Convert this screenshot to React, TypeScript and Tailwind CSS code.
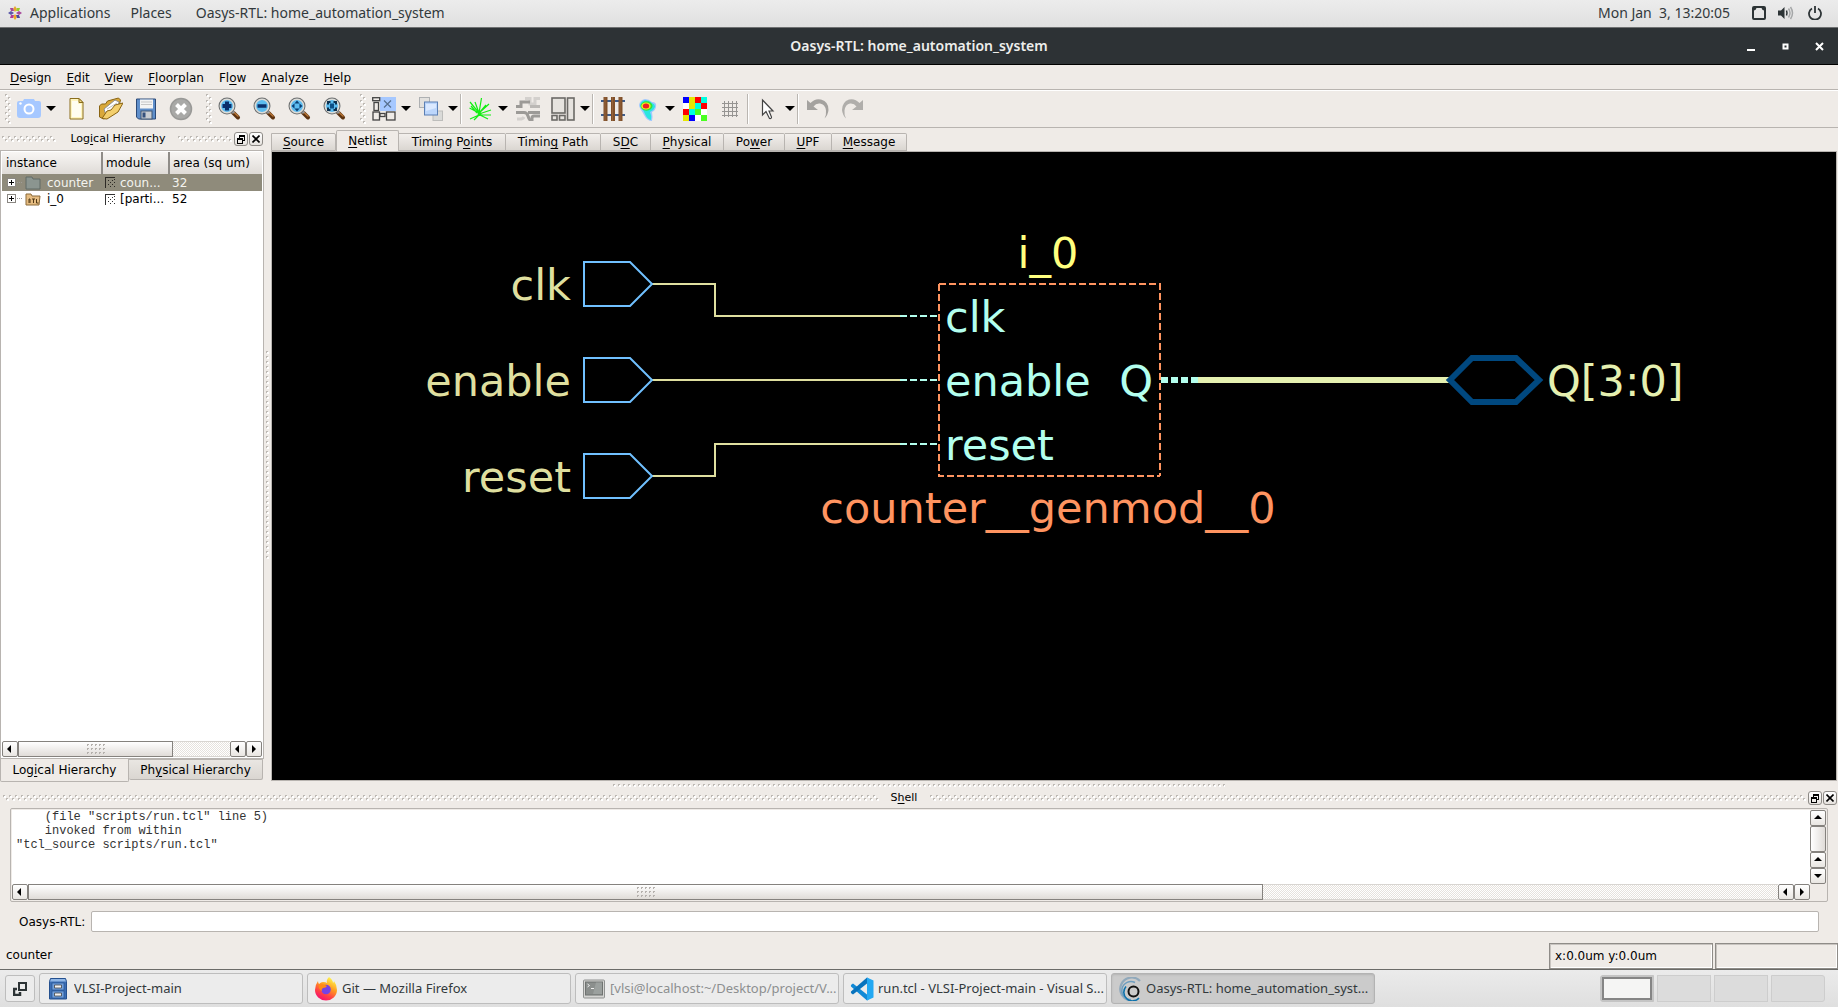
import { useId, type ReactNode } from "react";

/** Text with one underlined mnemonic letter. */
function Mnemonic({ text, at }: { text: string; at: number }) {
  return (
    <span className="whitespace-pre">
      {text.slice(0, at)}
      <span className="underline decoration-1 underline-offset-2">{text[at]}</span>
      {text.slice(at + 1)}
    </span>
  );
}

/** Staggered dots that mark a draggable handle. */
function Grip({ className }: { className: string }) {
  const id = useId();
  return (
    <svg className={className} aria-hidden="true" shapeRendering="crispEdges">
      <defs>
        <pattern id={id} width="6" height="6" patternUnits="userSpaceOnUse">
          <path d="M1 1h2v2H1zM4 4h2v2H4z" fill="#fff" />
          <path d="M0 0h2v1H1v1H0zM3 3h2v1H4v1H3z" fill="#bdb9b4" />
        </pattern>
      </defs>
      <rect width="100%" height="100%" fill={`url(#${id})`} />
    </svg>
  );
}

function SplitterDots({ vertical = false }: { vertical?: boolean }) {
  const id = useId();
  return (
    <svg className={vertical ? "h-[208px] w-[3px]" : "h-[3px] w-1/3"} aria-hidden="true" shapeRendering="crispEdges">
      <defs>
        <pattern id={id} width="5" height="5" patternUnits="userSpaceOnUse">
          <path d="M1 1h2v2H1z" fill="#fff" />
          <path d="M0 0h2v1H1v1H0z" fill="#bdb9b4" />
        </pattern>
      </defs>
      <rect width="100%" height="100%" fill={`url(#${id})`} />
    </svg>
  );
}

function Icon({ children, size = 24 }: { children: ReactNode; size?: number }) {
  return (
    <svg width={size} height={size} viewBox={`0 0 ${size} ${size}`} fill="none" aria-hidden="true" className="shrink-0">
      {children}
    </svg>
  );
}

/* ---------- toolbar drawings ---------- */

const camera = (
  <Icon>
    <path d="M2 4h4l1-2h10l1 2h4q2 0 2 2v12q0 3-3 3H3q-3 0-3-3V6q0-2 2-2z" fill="#a6c8ff" />
    <circle cx="12" cy="12" r="4.500" stroke="#fff" strokeWidth="2" />
    <circle cx="3.500" cy="6.500" r="1.200" fill="#fff" />
  </Icon>
);
const newDoc = (
  <Icon>
    <path d="M6 1.500h9l4 4V22H6z" fill="#fff5c0" stroke="#8a6d1c" />
    <path d="M8 4h6v3h3v13H8z" fill="#fffdf0" />
    <path d="M15 1.500v4h4z" fill="#f2dc8a" stroke="#8a6d1c" />
  </Icon>
);
const folder = (
  <Icon>
    <path d="M.500 20V9l2-2h4l2-3 11-3 2 2-2 8L5 22z" fill="#d9a83a" stroke="#8a6412" />
    <path d="M5 12 16 3l4 2-1 7-12 6z" fill="#fff" stroke="#8f8f8f" />
    <path d="M8 12 18 6" stroke="#bbb" />
    <path d="M3 21.500 8 14l4-1 4-5 8-2-5 9-11 7z" fill="#f3cf6d" stroke="#8a6412" />
  </Icon>
);
const save = (
  <Icon>
    <path d="M2.500 2h19v20h-17l-2-2z" fill="#5f8fcb" stroke="#2c4a78" />
    <rect x="6" y="2.500" width="13" height="9" fill="#f4f4f4" />
    <path d="M7 5h11M7 7.500h11" stroke="#c7c7c7" />
    <rect x="7" y="14" width="11" height="8" fill="#c9cdd2" stroke="#3f5674" />
    <rect x="8.500" y="15.500" width="3" height="5" fill="#35517c" />
  </Icon>
);
const cancel = (
  <Icon>
    <circle cx="12" cy="12" r="10.500" fill="#a9a9a7" stroke="#999997" strokeWidth="1.500" />
    <path d="m7.500 7.500 9 9m0-9-9 9" stroke="#fff" strokeWidth="4" />
  </Icon>
);

function Magnifier({ children }: { children: ReactNode }) {
  return (
    <Icon>
      <path d="m15 15.500 5 5" stroke="#5d3310" strokeWidth="4" strokeLinecap="round" />
      <path d="m15.500 15 4.500 4" stroke="#b97636" strokeWidth="1.500" strokeLinecap="round" />
      <path d="m13 13 3 3" stroke="#999" strokeWidth="3" />
      <circle cx="9" cy="9" r="7.500" fill="#5cbcf0" stroke="#6c6f70" strokeWidth="2" />
      <circle cx="9" cy="9" r="6.700" stroke="#dcdcd8" strokeWidth="1.500" />
      {children}
    </Icon>
  );
}
const zoomIn = (
  <Magnifier>
    <path d="M9 4.500v9M4.500 9h9" stroke="#0b2f6b" strokeWidth="4" />
  </Magnifier>
);
const zoomOut = (
  <Magnifier>
    <path d="M4.500 9h9" stroke="#0b2f6b" strokeWidth="3.500" />
  </Magnifier>
);
const zoomFit = (
  <Magnifier>
    <path d="m9 3.500 2.500 3h-5zM9 14.500l2.500-3h-5zM3.500 9l3-2.500v5zM14.500 9l-3-2.500v5z" fill="#0b3f73" />
  </Magnifier>
);
const zoomBox = (
  <Magnifier>
    <path d="M5 7.500V5h2.500M10.500 5H13v2.500M13 10.500V13h-2.500M7.500 13H5v-2.500" stroke="#0b3050" strokeWidth="2" />
    <rect x="7" y="6.500" width="4" height="5" fill="#0b4f86" />
  </Magnifier>
);
const netlist = (
  <Icon>
    <rect x="8" y="0" width="16" height="14" fill="#a6c8ff" />
    <path d="m12 3.500 7 7m0-7-7 7" stroke="#57708f" strokeWidth="1.200" />
    <g stroke="#444" fill="#efebe7" strokeWidth="1.300">
      <rect x=".700" y=".700" width="7" height="3" />
      <rect x="2" y="5.500" width="4.500" height="8" />
      <rect x="1" y="15" width="6.500" height="8" />
      <rect x="8" y="16.500" width="5" height="3" />
      <rect x="14.500" y="15" width="8.500" height="8" />
    </g>
  </Icon>
);
const layers = (
  <Icon>
    <rect x=".500" y=".500" width="10" height="10" fill="#e3e1de" stroke="#aeb0b2" />
    <rect x="14" y="14" width="9.500" height="9.500" fill="#dadad8" stroke="#bdbdbb" />
    <rect x="5.500" y="5" width="13" height="13" fill="#bcd6fb" stroke="#5b7fb4" />
    <path d="M7 7h10v4L7 14z" fill="#dbe9ff" />
  </Icon>
);
const burst = (
  <Icon>
    <path
      d="M10 16 12.500 1M10 16 6 5M10 16 1 5M10 16 .500 11M10 16 20 7M10 17l12-4M10 18l12 0M10 18l-9 4M10 18l-5 5M11 18l8 4M11 15l6-7M8 16 2 9"
      stroke="#12ee12"
      strokeWidth="1.200"
    />
    <circle cx="10.500" cy="17" r="2" fill="#12ee12" />
  </Icon>
);
const routes = (
  <Icon>
    <g stroke="#d3d0cd" strokeWidth="3">
      <path d="M9 1.500h5V7h5V1.500h5" />
      <path d="M1 22h3q3 0 4-2" />
    </g>
    <g stroke="#9c9a97" strokeWidth="3">
      <path d="M0 9.500h5V5h9" />
      <path d="M14 9.500h10" stroke="#bbb8b5" />
      <path d="M0 15.500h8q3 0 4 3.500t3 5" />
      <path d="M12 15.500h12M24 19h-6q-2 0-2 2v3" />
    </g>
  </Icon>
);
const floorplan = (
  <Icon>
    <g stroke="#6b6966" strokeWidth="1.600" fill="#e6e3df">
      <rect x="1" y="1" width="13" height="15" />
      <rect x="16.500" y="1" width="6.500" height="22" />
      <rect x="1" y="18.500" width="5" height="4.500" />
      <rect x="8.500" y="18.500" width="5.500" height="4.500" />
    </g>
  </Icon>
);
const rails = (
  <Icon>
    <path d="M0 4h24M0 18h24" stroke="#3d5d8c" strokeWidth="2" />
    <path d="M4.500 0v24M12 0v24M19.500 0v24" stroke="#80502a" strokeWidth="4" />
    <path d="M4 0v24M11.500 0v24M19 0v24" stroke="#94623a" />
  </Icon>
);
const heatmap = (
  <Icon>
    <path d="M3 8q1-5 6-6 4 0 7 3 5 0 4 5-1 4-4 5 1 5 0 9-5 0-8-6-1-2-3-5-2-3-2-5z" fill="#9fc8ff" />
    <path d="M4 8q1-4 5-5 4 0 7 3 3 1 3 4-1 3-5 5 2 4 1 8-4-1-6-6-1-3-3-5-2-2-2-4z" fill="#29e6e0" />
    <ellipse cx="10.500" cy="9" rx="6" ry="4.700" fill="#36e038" />
    <ellipse cx="10" cy="9" rx="4.700" ry="3.600" fill="#f5e720" />
    <ellipse cx="10" cy="9" rx="3.200" ry="2.500" fill="#f02020" />
  </Icon>
);
const blocks = (
  <Icon>
    <g shapeRendering="crispEdges">
      <path d="M0 0h6v6H0zM6 18h6v6H6z" fill="#0000ff" />
      <path d="M6 0h6v12H6zM0 18h6v6H0z" fill="#e6e600" />
      <path d="M12 0h6v6h-6zM18 6h6v6h-6zM0 12h6v6H0z" fill="#ff0000" />
      <path d="M18 0h6v6h-6zM12 6h6v6h-6zM6 12h6v6H6z" fill="#00ffe0" />
      <path d="M12 12h6v6h-6zM18 18h6v6h-6z" fill="#48ff20" />
      <path d="M0 6h6v6H0zM18 12h6v6h-6zM12 18h6v6h-6z" fill="#fff" />
    </g>
  </Icon>
);
const grid = (
  <Icon>
    <path d="M6.500 4v16M10.500 4v16M14.500 4v16M18.500 4v16M4 6.500h16M4 10.500h16M4 14.500h16M4 18.500h16" stroke="#969492" shapeRendering="crispEdges" />
  </Icon>
);
const pointer = (
  <Icon>
    <path d="M6.500 3v15l3.500-3.500 3.500 7q2 .500 2-1.500l-2.500-6H17z" fill="#fff" stroke="#444" strokeWidth="1.200" />
  </Icon>
);
const undo = (
  <Icon>
    <path d="M1 13V3l3.500 3Q9 1 15 2.500 23 5 22.500 13q-.500 5-4 8.500 2-4 1.500-8Q19 7 14 6.500q-4-.500-6.500 3L12 13z" fill="#a4a29f" />
  </Icon>
);
const redo = (
  <Icon>
    <path d="M22 13V3l-3.500 3Q14 1 8 2.500 1 5 1 13q.500 5 4 8.500-2-4-1.500-8Q4.500 7 9 6.500q4-.500 6.500 3L11 13z" fill="#b0aeab" />
  </Icon>
);

function ToolButton({ label, children, menu = false }: { label: string; children: ReactNode; menu?: boolean }) {
  return (
    <>
      <button type="button" aria-label={label} className="flex h-full w-[35px] items-center justify-center">
        {children}
      </button>
      {menu && (
        <button type="button" aria-label={`${label} options`} className="flex h-full w-3 items-center">
          <svg width="10" height="5" viewBox="0 0 10 5" aria-hidden="true">
            <path d="M0 0h10L5 5z" fill="#000" />
          </svg>
        </button>
      )}
    </>
  );
}

function ToolSeparator() {
  return (
    <span className="flex h-full w-[3px] items-center">
      <span className="h-[30px] w-0.5 border-r border-l border-r-white border-l-[#bab6b1]" />
    </span>
  );
}

function Toolbar() {
  return (
    <div role="toolbar" className="flex h-[38px] items-center border-b border-[#b8b4b0] bg-[#efebe7] shadow-[inset_0_1px_0_#fff]">
      <Grip className="ml-[5px] h-[30px] w-[6px]" />
      <ToolButton label="Capture" menu>{camera}</ToolButton>
      <ToolButton label="New">{newDoc}</ToolButton>
      <ToolButton label="Open">{folder}</ToolButton>
      <ToolButton label="Save">{save}</ToolButton>
      <ToolButton label="Stop">{cancel}</ToolButton>
      <Grip className="ml-2 h-[30px] w-[6px]" />
      <ToolButton label="Zoom in">{zoomIn}</ToolButton>
      <ToolButton label="Zoom out">{zoomOut}</ToolButton>
      <ToolButton label="Zoom to fit">{zoomFit}</ToolButton>
      <ToolButton label="Zoom to selection">{zoomBox}</ToolButton>
      <Grip className="ml-2 h-[30px] w-[6px]" />
      <ToolButton label="Netlist view" menu>{netlist}</ToolButton>
      <ToolButton label="Layers" menu>{layers}</ToolButton>
      <ToolSeparator />
      <ToolButton label="Flylines" menu>{burst}</ToolButton>
      <ToolButton label="Routes">{routes}</ToolButton>
      <ToolButton label="Floorplan" menu>{floorplan}</ToolButton>
      <ToolSeparator />
      <ToolButton label="Rails">{rails}</ToolButton>
      <ToolButton label="Heat map" menu>{heatmap}</ToolButton>
      <ToolButton label="Blocks">{blocks}</ToolButton>
      <ToolButton label="Grid">{grid}</ToolButton>
      <ToolSeparator />
      <ToolButton label="Pointer" menu>{pointer}</ToolButton>
      <ToolSeparator />
      <ToolButton label="Undo">{undo}</ToolButton>
      <ToolButton label="Redo">{redo}</ToolButton>
    </div>
  );
}

/* ---------- desktop panel and window title ---------- */

function TopPanel() {
  return (
    <header className="flex h-7 items-center border-b border-[#6f7172] bg-linear-to-b from-[#ececec] to-[#e0e0e0] px-2 pb-px font-['Noto_Sans',sans-serif] text-sm text-[#32393c]">
      <svg width="14" height="14" viewBox="0 0 14 14" aria-hidden="true" className="mr-2">
        <path d="M7 0 9 3 7 6 5 3z" fill="#e9a530" />
        <path d="m7 8 2 3-2 3-2-3z" fill="#efa724" />
        <path d="m0 7 3-2 3 2-3 2z" fill="#5a58a8" />
        <path d="m8 7 3-2 3 2-3 2z" fill="#a8489a" />
        <path d="M2 2h3l1 3-3 0z" fill="#a8489a" />
        <path d="M12 2H9L8 5l3 0z" fill="#9ccd2a" />
        <path d="M2 12h3l1-3-3 0z" fill="#b03a9a" />
        <path d="M12 12H9L8 9l3 0z" fill="#4a48a0" />
      </svg>
      <button type="button">Applications</button>
      <button type="button" className="ml-5">Places</button>
      <button type="button" className="ml-6">Oasys-RTL: home_automation_system</button>
      <span className="ml-auto whitespace-pre">Mon Jan  3, 13:20:05</span>
      <button type="button" aria-label="Display" className="ml-[22px]">
        <svg width="14" height="14" viewBox="0 0 14 14" aria-hidden="true">
          <path fillRule="evenodd" d="M2 0h10q2 0 2 2v10q0 2-2 2H2q-2 0-2-2V2q0-2 2-2zm2.500 2Q4 4 2 4.500V12h10V4.500Q10 4 9.500 2z" fill="#2d3436" />
        </svg>
      </button>
      <button type="button" aria-label="Volume" className="ml-3">
        <svg width="16" height="14" viewBox="0 0 16 14" fill="none" aria-hidden="true">
          <path d="M0 4.500h3L6.500 1v12L3 9.500H0z" fill="#2d3436" />
          <path d="M8.500 4.500q1 2.500 0 5" stroke="#2d3436" strokeWidth="1.500" />
          <path d="M10.500 2.500q3 4.500 0 9M12.500 1q4 6 0 12" stroke="#a5a7a8" strokeWidth="1.500" />
        </svg>
      </button>
      <button type="button" aria-label="Power" className="mr-2 ml-[14px]">
        <svg width="14" height="14" viewBox="0 0 14 14" fill="none" aria-hidden="true">
          <path d="M4 2.500a6 6 0 1 0 6 0M7 0v7" stroke="#2d3436" strokeWidth="1.800" />
        </svg>
      </button>
    </header>
  );
}

function TitleBar() {
  return (
    <div className="grid h-[37px] grid-cols-[1fr_auto_1fr] items-center border-b border-black bg-[#2d3235] font-['Noto_Sans',sans-serif] text-[#eeeeec]">
      <h1 className="col-start-2 text-sm font-semibold">Oasys-RTL: home_automation_system</h1>
      <div className="flex items-center justify-end gap-[25px] pr-3.5">
        <button type="button" aria-label="Minimize">
          <svg width="9" height="9" viewBox="0 0 9 9" aria-hidden="true"><path d="M0 7h8v2H0z" fill="#fff" /></svg>
        </button>
        <button type="button" aria-label="Maximize">
          <svg width="9" height="9" viewBox="0 0 9 9" fill="none" aria-hidden="true"><path d="M2.500 2.500h4v4h-4z" stroke="#fff" strokeWidth="2" /></svg>
        </button>
        <button type="button" aria-label="Close">
          <svg width="9" height="9" viewBox="0 0 9 9" aria-hidden="true"><path d="m1 1 7 7m0-7-7 7" stroke="#fff" strokeWidth="2" /></svg>
        </button>
      </div>
    </div>
  );
}

function MenuBar() {
  const items: [string, number][] = [
    ["Design", 0],
    ["Edit", 0],
    ["View", 0],
    ["Floorplan", 0],
    ["Flow", 2],
    ["Analyze", 0],
    ["Help", 0],
  ];
  return (
    <nav className="flex h-[25px] items-center gap-[15px] border-b border-[#b8b4b0] px-2.5 pt-0.5">
      {items.map(([text, at]) => (
        <button key={text} type="button">
          <Mnemonic text={text} at={at} />
        </button>
      ))}
    </nav>
  );
}

/* ---------- dock pieces ---------- */

function DockButtons() {
  const box =
    "flex size-3.5 items-center justify-center rounded-[3px] border border-[#8d8a86] bg-linear-to-b from-white to-[#e6e2de]";
  return (
    <div className="flex gap-px">
      <button type="button" aria-label="Float" className={box}>
        <svg width="8" height="9" viewBox="0 0 8 9" fill="none" aria-hidden="true" shapeRendering="crispEdges">
          <path d="M2 0h6v2H2zM7 2h1v4H6V5h1zM2 2h1v1H2zM0 3h6v2H0zM0 5h1v4H0zM5 5h1v4H5zM1 8h4v1H1z" fill="#000" />
        </svg>
      </button>
      <button type="button" aria-label="Close" className={box}>
        <svg width="8" height="8" viewBox="0 0 8 8" aria-hidden="true">
          <path d="m.500.500 7 7m0-7-7 7" stroke="#000" strokeWidth="1.600" />
        </svg>
      </button>
    </div>
  );
}

const arrows = {
  left: "M5 0v8L1 4z",
  right: "M2 0v8l4-4z",
  up: "M0 5h8L4 1z",
  down: "M0 2h8L4 6z",
};

function ArrowButton({ dir }: { dir: keyof typeof arrows }) {
  return (
    <button
      type="button"
      aria-label={`Scroll ${dir}`}
      className="flex size-4 shrink-0 items-center justify-center rounded-xs border border-[#85827e] bg-linear-to-b from-white to-[#e9e6e2]"
    >
      <svg width="8" height="8" viewBox="0 0 8 8" aria-hidden="true">
        <path d={arrows[dir]} fill="#000" />
      </svg>
    </button>
  );
}

function HScroll({ thumb }: { thumb: string }) {
  return (
    <div className="flex h-4 min-w-0 flex-1">
      <ArrowButton dir="left" />
      <div className="flex-1 border-y border-[#d8d5d1] bg-[repeating-conic-gradient(#ffffff_0_25%,#e6e2dd_0_50%)] bg-size-[2px_2px]">
        <div
          className={`-my-px flex h-4 items-center justify-center border border-[#85827e] bg-linear-to-b from-white to-[#e0dcd8] ${thumb}`}
        >
          <svg width="18" height="10" viewBox="0 0 18 10" aria-hidden="true" shapeRendering="crispEdges">
            {[0, 4, 8].map((y) =>
              [0, 4, 8, 12, 16].map((x) => (
                <path key={`${x}-${y}`} d={`M${x} ${y}h2v1h-1v1h-1z`} fill="#b5b1ad" />
              )),
            )}
          </svg>
        </div>
      </div>
      <ArrowButton dir="left" />
      <ArrowButton dir="right" />
    </div>
  );
}

function Expander() {
  return (
    <svg width="18" height="16" viewBox="0 0 18 16" fill="none" aria-hidden="true" shapeRendering="crispEdges">
      <path d="M2.500 3.500h8v8h-8z" fill="#fff" stroke="#8a8782" />
      <path d="M4 7.500h5M6.500 5v5" stroke="#000" />
      <path d="M12 7.500h5" stroke="#a09d98" strokeDasharray="1 1" />
    </svg>
  );
}

function ModuleMark({ dark }: { dark: boolean }) {
  const ink = dark ? "#2d2a25" : "#333";
  return (
    <svg width="10" height="11" viewBox="0 0 10 11" fill="none" aria-hidden="true" shapeRendering="crispEdges" className="shrink-0">
      <path d="M.500 11V.500H10" stroke={ink} />
      <path d="M3 3h1v1H3zM7 3h1v1H7zM5 5h1v1H5zM9 5h1v1H9zM3 7h1v1H3zM7 7h1v1H7zM5 9h1v1H5zM9 9h1v1H9zM9 2h1v1H9z" fill={ink} />
    </svg>
  );
}

function HierarchyTree() {
  const rows = [
    { name: "counter", module: "coun...", area: "32", selected: true },
    { name: "i_0", module: "[parti...", area: "52", selected: false },
  ];
  return (
    <table className="w-full table-fixed border-collapse bg-white">
      <colgroup>
        <col className="w-[100px]" />
        <col className="w-[67px]" />
        <col />
      </colgroup>
      <thead>
        <tr className="h-[22px] bg-linear-to-b from-[#f8f6f4] to-[#dfdbd7] text-left">
          <th className="border-r-2 border-[#8f8c88] pl-1 font-normal">instance</th>
          <th className="border-r-2 border-[#8f8c88] pl-[3px] font-normal">module</th>
          <th className="pl-[3px] font-normal">area (sq um)</th>
        </tr>
      </thead>
      <tbody>
        {rows.map((r) => (
          <tr key={r.name} className={r.selected ? "h-[17px] bg-[#8f8b7b] text-[#f4f3ef]" : "h-4"}>
            <td className="p-0 pl-[3px] leading-4">
              <span className="flex items-center">
                <Expander />
                <svg width="16" height="14" viewBox="0 0 16 14" aria-hidden="true" className="mr-1.5 ml-0.5">
                  {r.selected ? (
                    <path d="M1 1h6l1 2h7v10H1z" fill="#8b9590" stroke="#616a66" />
                  ) : (
                    <>
                      <path d="M1 13V2h5l1 2h8l-1 9z" fill="#e6bd82" stroke="#8b6a38" />
                      <path d="M4 11V7h1v4M7 7h3M8.500 7v4M11.500 7v4h2" stroke="#503814" fill="none" />
                    </>
                  )}
                </svg>
                {r.name}
              </span>
            </td>
            <td className="p-0 pl-[3px] leading-4">
              <span className="flex items-center gap-[5px]">
                <ModuleMark dark={r.selected} />
                {r.module}
              </span>
            </td>
            <td className="p-0 pl-[3px] leading-4">{r.area}</td>
          </tr>
        ))}
      </tbody>
    </table>
  );
}

function HierarchyDock() {
  return (
    <section className="flex w-[264px] shrink-0 flex-col">
      <div className="flex h-[22px] items-center justify-between pr-px pl-0.5 text-[11px]">
        <Grip className="h-[6px] w-[54px]" />
        <h2 className="pl-0.5">
          <Mnemonic text="Logical Hierarchy" at={3} />
        </h2>
        <div className="flex items-center gap-0.5">
          <Grip className="h-[6px] w-[54px]" />
          <DockButtons />
        </div>
      </div>
      <div className="flex flex-1 flex-col border border-[#b8b4b0] bg-white p-px">
        <HierarchyTree />
        <div className="mt-auto flex">
          <HScroll thumb="w-[155px]" />
        </div>
      </div>
      <div role="tablist" className="flex h-[23px] items-start">
        <button
          type="button"
          role="tab"
          aria-selected="true"
          className="h-[23px] w-[129px] rounded-b-xs border border-t-0 border-[#b8b4b0] bg-[#efebe7]"
        >
          <Mnemonic text="Logical Hierarchy" at={3} />
        </button>
        <button
          type="button"
          role="tab"
          aria-selected="false"
          className="h-[21px] w-[134px] rounded-b-xs border border-l-0 border-[#b8b4b0] bg-linear-to-b from-[#e9e6e2] to-[#dad6d1]"
        >
          <Mnemonic text="Physical Hierarchy" at={2} />
        </button>
      </div>
    </section>
  );
}

/* ---------- schematic ---------- */

function InputPort({ y, name }: { y: number; name: string }) {
  return (
    <g>
      <path d={`M312 ${y - 22}H358L380 ${y}L358 ${y + 22}H312Z`} stroke="#70c0ff" strokeWidth="2" />
      <text x="299" y={y + 16} textAnchor="end" fill="#dfdf9f">{name}</text>
    </g>
  );
}

function Schematic() {
  return (
    <svg
      role="img"
      aria-label="Netlist schematic"
      className="size-full bg-black font-['DejaVu_Sans',sans-serif] text-[43px]"
      fill="none"
    >
      <g stroke="#dfdf9f" strokeWidth="2">
        <path d="M380 132H443V164H628" />
        <path d="M380 228H628" />
        <path d="M380 324H443V292H628" />
      </g>
      <path d="M628 164h38M628 228h38M628 292h38" stroke="#b3ffee" strokeWidth="2" strokeDasharray="7 3" />
      <InputPort y={132} name="clk" />
      <InputPort y={228} name="enable" />
      <InputPort y={324} name="reset" />

      <path d="M667 132H888V324" stroke="#ff9460" strokeWidth="2" strokeDasharray="7 3" />
      <path d="M667 132V324H888" stroke="#ff9460" strokeWidth="2" strokeDasharray="7 3" />
      <text x="776" y="116" textAnchor="middle" fill="#ffff7f">i_0</text>
      <text x="776" y="371" textAnchor="middle" fill="#ff9460">counter__genmod__0</text>
      <g fill="#b3ffee">
        <text x="673" y="180">clk</text>
        <text x="673" y="244">enable</text>
        <text x="673" y="308">reset</text>
        <text x="881" y="244" textAnchor="end">Q</text>
      </g>

      <path d="M889 228h38" stroke="#b3ffee" strokeWidth="6" strokeDasharray="7 3" />
      <path d="M926 228H1177" stroke="#e5f0b0" strokeWidth="6" />
      <path d="M1178 228 1200 206H1244L1267 228 1244 250H1200Z" stroke="#00487f" strokeWidth="6" />
      <text x="1275" y="244" fill="#e5f0b0">Q[3:0]</text>
    </svg>
  );
}

function Workspace() {
  const tabs: [string, number, string][] = [
    ["Source", 0, "w-[65px]"],
    ["Netlist", 0, "w-[63px]"],
    ["Timing Points", 8, "w-[107px]"],
    ["Timing Path", 5, "w-[95px]"],
    ["SDC", 1, "w-[50px]"],
    ["Physical", 0, "w-[73px]"],
    ["Power", 2, "w-[61px]"],
    ["UPF", 0, "w-[47px]"],
    ["Message", 0, "w-[75px]"],
  ];
  return (
    <section className="flex min-w-0 flex-1 flex-col pr-px pb-px">
      <div role="tablist" className="flex h-[23px] items-end pt-0.5">
        {tabs.map(([text, at, width]) =>
          text === "Netlist" ? (
            <button
              key={text}
              type="button"
              role="tab"
              aria-selected="true"
              className={`h-[21px] rounded-t-xs border border-b-0 border-[#b8b4b0] bg-[#efebe7] ${width}`}
            >
              <Mnemonic text={text} at={at} />
            </button>
          ) : (
            <button
              key={text}
              type="button"
              role="tab"
              aria-selected="false"
              className={`h-[18px] rounded-tr-xs border border-l-0 border-[#b8b4b0] bg-linear-to-b from-[#f2efec] to-[#dad6d1] leading-4 first:border-l ${width}`}
            >
              <Mnemonic text={text} at={at} />
            </button>
          ),
        )}
      </div>
      <div className="min-h-0 flex-1 overflow-hidden border border-[#b8b4b0]">
        <Schematic />
      </div>
    </section>
  );
}

/* ---------- shell ---------- */

function ShellDock() {
  return (
    <section className="shrink-0">
      <div className="flex h-5 items-center gap-3 pr-px pl-[3px] text-[11px]">
        <Grip className="h-[6px] min-w-0 flex-1" />
        <h2 className="pr-px">
          <Mnemonic text="Shell" at={1} />
        </h2>
        <Grip className="h-[6px] min-w-0 flex-1" />
        <div className="-ml-2.5">
          <DockButtons />
        </div>
      </div>
      <div className="mr-2.5 ml-2.5 flex h-[94px] rounded-xs border border-[#b8b4b0] p-px">
        <div className="flex min-w-0 flex-1 flex-col bg-white">
          <pre className="min-h-0 flex-1 overflow-hidden pl-1 font-['Liberation_Mono',monospace] text-xs leading-[14px] text-[#333]">
            {'    (file "scripts/run.tcl" line 5)\n    invoked from within\n"tcl_source scripts/run.tcl"'}
          </pre>
          <div className="flex">
            <HScroll thumb="w-12/17" />
          </div>
        </div>
        <div className="flex w-4 flex-col pb-4">
          <ArrowButton dir="up" />
          <div className="flex-1 rounded-xs border border-[#85827e] bg-linear-to-r from-white to-[#e0dcd8]" />
          <ArrowButton dir="up" />
          <ArrowButton dir="down" />
        </div>
      </div>
      <div className="mt-[9px] mb-[11px] flex h-[21px] items-center gap-1.5 pr-[19px] pl-[19px]">
        <label htmlFor="command" className="whitespace-nowrap">Oasys-RTL:</label>
        <input
          id="command"
          type="text"
          className="h-full min-w-0 flex-1 rounded-xs border border-[#b8b4b0] bg-white px-1 outline-none"
        />
      </div>
    </section>
  );
}

function StatusBar() {
  const cell = "flex h-full items-center border border-[#8f8c88] pl-[5px] shadow-[inset_1px_1px_0_#c8c4c0,inset_-1px_-1px_0_#fff]";
  return (
    <footer className="flex h-[26px] shrink-0 items-center gap-0.5 pl-1.5">
      <span className="flex-1 pb-0.5">counter</span>
      <span className={`w-[164px] ${cell}`}>x:0.0um y:0.0um</span>
      <span className={`w-[123px] ${cell}`} />
    </footer>
  );
}

/* ---------- desktop task list ---------- */

const cabinet = (
  <Icon>
    <path d="M4.500 1.500h15l1 3v17.500h-17V4.500z" fill="#3c6eb4" stroke="#24508f" />
    <path d="M5 2h14l1 2.500H4z" fill="#8fb6e6" />
    <g fill="#72a0dc" stroke="#24508f" strokeWidth=".700">
      <rect x="6" y="6" width="12" height="7" />
      <rect x="6" y="14" width="12" height="7" />
    </g>
    <path d="M8.500 8h7v3h-7zM8.500 16h7v3h-7z" fill="#f2f2f2" stroke="#444" strokeWidth=".800" />
  </Icon>
);

function Firefox() {
  const id = useId();
  return (
    <Icon>
      <defs>
        <linearGradient id={id} x1="18" y1="2" x2="7" y2="22" gradientUnits="userSpaceOnUse">
          <stop offset="0" stopColor="#fff04a" />
          <stop offset=".4" stopColor="#ff9a1f" />
          <stop offset=".75" stopColor="#ff3f47" />
          <stop offset="1" stopColor="#f5156c" />
        </linearGradient>
      </defs>
      <path
        d="M15 0q4 3 4 6 1-1 1-2 3 4 3 9a11 10.500 0 0 1-22 0Q1 8 4 4q0 2 1 3 2-2 4-2 3 0 4 1-1-3 2-6z"
        fill={`url(#${id})`}
      />
      <circle cx="12" cy="12.500" r="4.800" fill="#7542e5" />
      <path d="M5 8q4-2 8 1-1 2-4 2-2 1-1 3-4-2-3-6z" fill="#ff8a16" />
    </Icon>
  );
}

const terminal = (
  <Icon>
    <rect x="1.500" y="3" width="21" height="18" rx="1" fill="#d5d5d3" stroke="#8f9190" />
    <rect x="3.500" y="5" width="17" height="13" fill="#8b8f8d" stroke="#6f7371" />
    <path d="m5.500 7 2 1.500-2 1.500M9 11.500h3" stroke="#eee" />
    <path d="M14 5.500h6V17h-9z" fill="#9ba09e" />
  </Icon>
);
const vscode = (
  <Icon>
    <path d="M17 .500 19 2v20l-2 1.500L1 9.500q-.500-1 .500-2L3 6.500l14 11z" fill="#1089d6" />
    <path d="M17 .500 1 14.500q-.500 1 .500 2l1.500 1L17 6.500z" fill="#0873bd" />
    <path d="M17 .500 23.500 3.500V20.500L17 23.500z" fill="#23a8f2" />
  </Icon>
);
const swirl = (
  <Icon>
    <circle cx="15.500" cy="14.500" r="5" stroke="#111" strokeWidth="2" />
    <path d="M22 4A11.500 11.500 0 1 0 13 23.500" stroke="#90a9bc" strokeWidth="2.200" />
    <path d="M17 5.500A9 9 0 1 0 13 22.500" stroke="#6d9dbf" strokeWidth="1.500" />
    <path d="M8 9.500A8.500 8.500 0 0 0 21 21" stroke="#0d72ac" strokeWidth="1.600" />
  </Icon>
);

function TaskBar() {
  const tasks = [
    { icon: cabinet, text: "VLSI-Project-main", look: "border-[#bdbdbd] bg-[#ececec]" },
    { icon: <Firefox />, text: "Git — Mozilla Firefox", look: "border-[#bdbdbd] bg-[#ececec]" },
    { icon: terminal, text: "[vlsi@localhost:~/Desktop/project/V...", look: "border-[#bdbdbd] bg-[#ececec] text-[#8c8f90]" },
    { icon: vscode, text: "run.tcl - VLSI-Project-main - Visual S...", look: "border-[#bdbdbd] bg-[#ececec]" },
    {
      icon: swirl,
      text: "Oasys-RTL: home_automation_syst...",
      look: "border-[#b3b3b3] bg-[#cbcbcb] shadow-[inset_0_1px_2px_#b5b5b5]",
    },
  ];
  return (
    <footer className="flex h-[38px] shrink-0 items-center border-t border-[#6b6b68] bg-linear-to-b from-[#ebebeb] to-[#dfdfdf] pr-[13px] pl-[5px] font-['Noto_Sans',sans-serif] text-[13px] text-[#32393c]">
      <button
        type="button"
        aria-label="Show desktop"
        className="mr-1 flex h-[27px] w-[30px] items-center justify-center rounded-[3px] border border-[#bdbdbd] bg-[#ececec]"
      >
        <svg width="14" height="14" viewBox="0 0 14 14" fill="none" aria-hidden="true">
          <path d="M6 1h7v7H6z" stroke="#2d3436" strokeWidth="2" />
          <path d="M4 7H1v6h6v-3" stroke="#2d3436" strokeWidth="2.500" />
        </svg>
      </button>
      <div className="flex min-w-0 gap-1">
        {tasks.map((t) => (
          <button
            key={t.text}
            type="button"
            className={`flex h-[31px] w-[264px] min-w-0 items-center gap-1 rounded-[3px] border pl-1.5 ${t.look}`}
          >
            {t.icon}
            <span className="min-w-0 truncate">{t.text}</span>
          </button>
        ))}
      </div>
      <div className="ml-auto flex gap-[3px]">
        <button type="button" aria-label="Workspace 1" className="h-[27px] w-[54px] rounded-l-[3px] border border-[#c4c4c4] bg-[#c4c4c4] p-px">
          <span className="block h-full border-2 border-[#858585] bg-[#f5f5f4]" />
        </button>
        <button type="button" aria-label="Workspace 2" className="h-[27px] w-[54px] border border-[#cdcdcd] bg-[#dcdcdc]" />
        <button type="button" aria-label="Workspace 3" className="h-[27px] w-[54px] border border-[#cdcdcd] bg-[#dcdcdc]" />
        <button type="button" aria-label="Workspace 4" className="h-[27px] w-[54px] rounded-r-[3px] border border-[#cdcdcd] bg-[#dcdcdc]" />
      </div>
    </footer>
  );
}

export default function App() {
  return (
    <div className="flex h-screen flex-col overflow-hidden bg-[#efebe7] font-['DejaVu_Sans',sans-serif] text-xs text-black">
      <TopPanel />
      <TitleBar />
      <MenuBar />
      <Toolbar />
      <main className="flex min-h-0 flex-1">
        <HierarchyDock />
        <div className="flex w-[7px] shrink-0 items-center justify-center">
          <SplitterDots vertical />
        </div>
        <Workspace />
      </main>
      <div className="flex h-1.5 shrink-0 items-center justify-center">
        <SplitterDots />
      </div>
      <ShellDock />
      <StatusBar />
      <TaskBar />
    </div>
  );
}
